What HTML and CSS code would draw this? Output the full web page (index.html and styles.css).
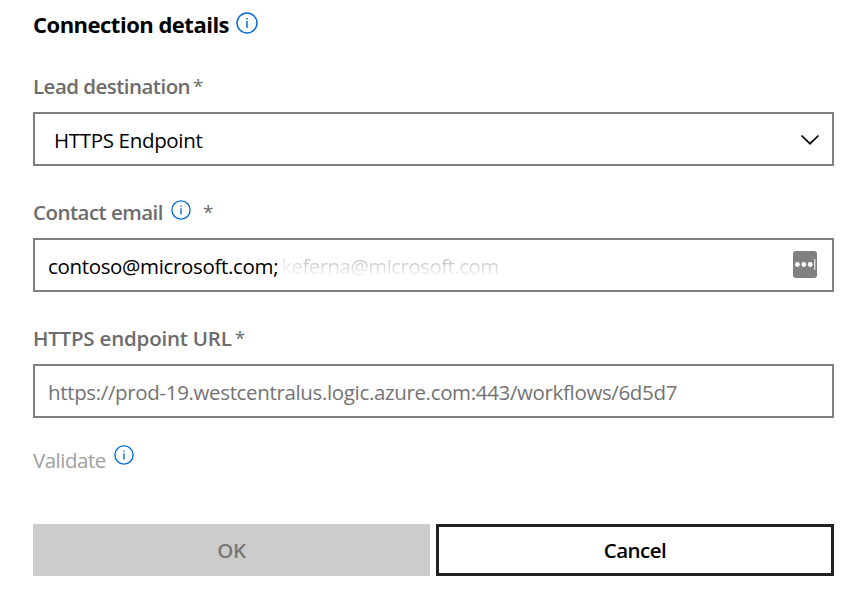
FILE: index.html
```html
<!DOCTYPE html>
<html lang="en">
<head>
<meta charset="utf-8">
<title>Connection details</title>
<link rel="stylesheet" href="styles.css">
</head>
<body>
<form class="panel">
  <h1 class="title"><span>Connection details</span>
    <svg class="info info-large" viewBox="0 0 22 22"><circle cx="11" cy="11" r="10"/><path d="M11 9v7M11 6v1.5"/></svg></h1>

  <div class="label"><span class="label-lead">Lead destination</span><span class="required">*</span></div>
  <div class="field select"><span class="select-value">HTTPS Endpoint</span>
    <svg class="chevron" viewBox="0 0 20 12"><path d="M1.5 1.5 10 9.7l8.5-8.2"/></svg></div>

  <div class="label"><span class="label-email">Contact email</span>
    <svg class="info" viewBox="0 0 22 22"><circle cx="11" cy="11" r="10"/><path d="M11 9v7M11 6v1.5"/></svg>
    <span class="required spaced">*</span></div>
  <div class="field"><span class="email">contoso@microsoft.com;</span><span class="faded">keferna@microsoft.com</span>
    <svg class="manager" viewBox="0 0 24 27"><rect width="24" height="27" rx="3"/><g><circle cx="4.4" cy="13.5" r="2.4"/><circle cx="10.8" cy="13.5" r="2.4"/><circle cx="17.2" cy="13.5" r="2.4"/><path d="M21.3 8h1v11h-1z"/></g></svg></div>

  <div class="label"><span class="label-url">HTTPS endpoint URL</span><span class="required">*</span></div>
  <div class="field"><span class="url">https://prod-19.westcentralus.logic.azure.com:443/workflows/6d5d7</span></div>

  <div class="validate"><span>Validate</span>
    <svg class="info" viewBox="0 0 22 22"><circle cx="11" cy="11" r="10"/><path d="M11 9v7M11 6v1.5"/></svg></div>

  <div class="actions">
    <button class="button ok" type="button" disabled>OK</button>
    <button class="button cancel" type="button">Cancel</button>
  </div>
</form>
</body>
</html>
```
FILE: styles.css
```css
* { box-sizing: border-box; }
body {
  margin: 0;
  background: #fff;
  color: #000;
  font: 400 20.5px/28px "Open Sans", "Noto Sans", sans-serif;
}
.panel { width: 801px; margin: 0 0 0 33px; padding-top: 10px; }
.title {
  display: flex;
  height: 28px;
  margin: 0;
  font-size: 22px;
  font-weight: 700;
  letter-spacing: -0.5px;
}
.info {
  flex: none;
  width: 20px;
  height: 20px;
  margin: 2px 0 0 8px;
  fill: none;
  stroke: #0b6bd8;
  stroke-width: 1.5;
}
.info-large { width: 22px; height: 22px; margin-left: 7px; }
.label {
  display: flex;
  height: 28px;
  margin-top: 32px;
  color: #6c6c6c;
  font-weight: 600;
  letter-spacing: -0.53px;
}
.title + .label { margin-top: 34px; }
.required { margin-left: 3px; font-size: 19px; font-weight: 400; }
.spaced { margin-left: 12px; }
.label-url { letter-spacing: -0.2px; }
.field {
  display: flex;
  align-items: center;
  height: 54px;
  margin-top: 12px;
  padding: 1px 15px 0 13px;
  border: 2px solid #808080;
  white-space: nowrap;
}
.select { padding-left: 19px; padding-right: 12px; }
.chevron {
  width: 20px;
  height: 12px;
  margin-left: auto;
  fill: none;
  stroke: #000;
  stroke-width: 1.7;
}
.select-value { letter-spacing: -0.33px; }
.email { letter-spacing: -0.34px; }
.faded {
  margin-left: 3px;
  color: transparent;
  background: linear-gradient(90deg, rgba(255, 255, 255, 0.75), rgba(255, 255, 255, 0) 12%), linear-gradient(#c4c4c4 35%, #dcdcdc 55%, #f0f0f0 80%);
  background-clip: text;
  letter-spacing: -0.55px;
}
.manager { width: 24px; height: 27px; margin: -2px 0 0 auto; fill: #808080; }
.manager g { fill: #fff; }
.url { color: #737373; letter-spacing: -0.35px; }
.validate {
  display: flex;
  height: 28px;
  margin-top: 28px;
  color: #a0a0a0;
  letter-spacing: -0.5px;
}
.validate .info { margin-top: -1px; }
.actions { display: flex; gap: 6px; margin-top: 50px; }
.button {
  height: 52px;
  padding: 0;
  border: 0;
  font: 600 20.5px/28px "Open Sans", "Noto Sans", sans-serif;
  letter-spacing: -0.4px;
}
.ok { width: 397px; background: #ccc; color: #777; }
.cancel { width: 398px; border: 3px solid #212121; background: #fff; color: #000; letter-spacing: -0.5px; }
```
